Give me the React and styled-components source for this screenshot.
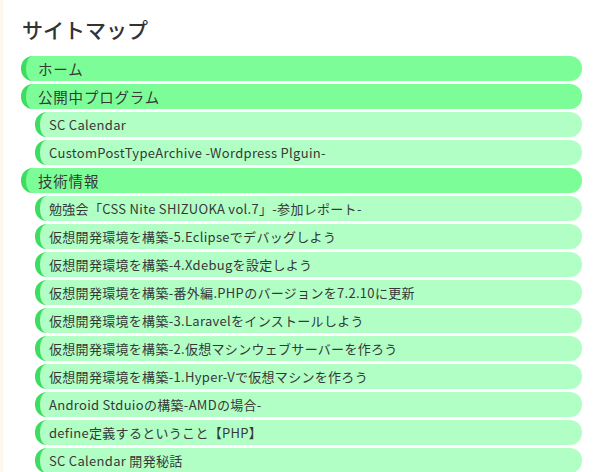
import React from 'react';
import styled, { createGlobalStyle } from 'styled-components';

const GlobalStyle = createGlobalStyle`
  body {
    margin: 0;
    background: #fff;
    font-family: "Noto Sans CJK JP", "Noto Sans", sans-serif;
  }
`;

const Page = styled.div`
  padding: 14px 18px 0 18px;
  height: 472px;
  box-sizing: border-box;
  overflow: hidden;
  border-left: 3px solid #fdf8ec;
`;

const Title = styled.h2`
  margin: 0 0 0 1px;
  font-size: 21px;
  line-height: 30px;
  font-weight: 500;
  color: #333;
`;

const List = styled.ul`
  list-style: none;
  margin: 12px 0 0;
  padding: 0;
  display: flex;
  flex-direction: column;
  gap: 3px;
`;

const Item = styled.li`
  display: flex;
  align-items: center;
  height: 25px;
  box-sizing: border-box;
  margin-left: ${p => (p.$sub ? '14px' : '0')};
  padding-left: ${p => (p.$sub ? '9px' : '12px')};
  background: ${p => (p.$sub ? '#b2ffc6' : '#7dfd98')};
  border-left: 5px solid #3fdc62;
  border-radius: 12px;
  color: #383838;
  font-size: ${p => (p.$sub ? '13px' : '14.5px')};
  letter-spacing: ${p => (p.$sub ? '0.3px' : '0.8px')};
  white-space: nowrap;
`;

const items = [
  { label: 'ホーム' },
  { label: '公開中プログラム' },
  { label: 'SC Calendar', sub: true },
  { label: 'CustomPostTypeArchive -Wordpress Plguin-', sub: true },
  { label: '技術情報' },
  { label: '勉強会「CSS Nite SHIZUOKA vol.7」-参加レポート-', sub: true },
  { label: '仮想開発環境を構築-5.Eclipseでデバッグしよう', sub: true },
  { label: '仮想開発環境を構築-4.Xdebugを設定しよう', sub: true },
  { label: '仮想開発環境を構築-番外編.PHPのバージョンを7.2.10に更新', sub: true },
  { label: '仮想開発環境を構築-3.Laravelをインストールしよう', sub: true },
  { label: '仮想開発環境を構築-2.仮想マシンウェブサーバーを作ろう', sub: true },
  { label: '仮想開発環境を構築-1.Hyper-Vで仮想マシンを作ろう', sub: true },
  { label: 'Android Stduioの構築-AMDの場合-', sub: true },
  { label: 'define定義するということ【PHP】', sub: true },
  { label: 'SC Calendar 開発秘話', sub: true },
];

const App = () => (
  <>
    <GlobalStyle />
    <Page>
      <Title>サイトマップ</Title>
      <List>
        {items.map((item, i) => (
          <Item key={i} $sub={item.sub}>
            {item.label}
          </Item>
        ))}
      </List>
    </Page>
  </>
);

export default App;
